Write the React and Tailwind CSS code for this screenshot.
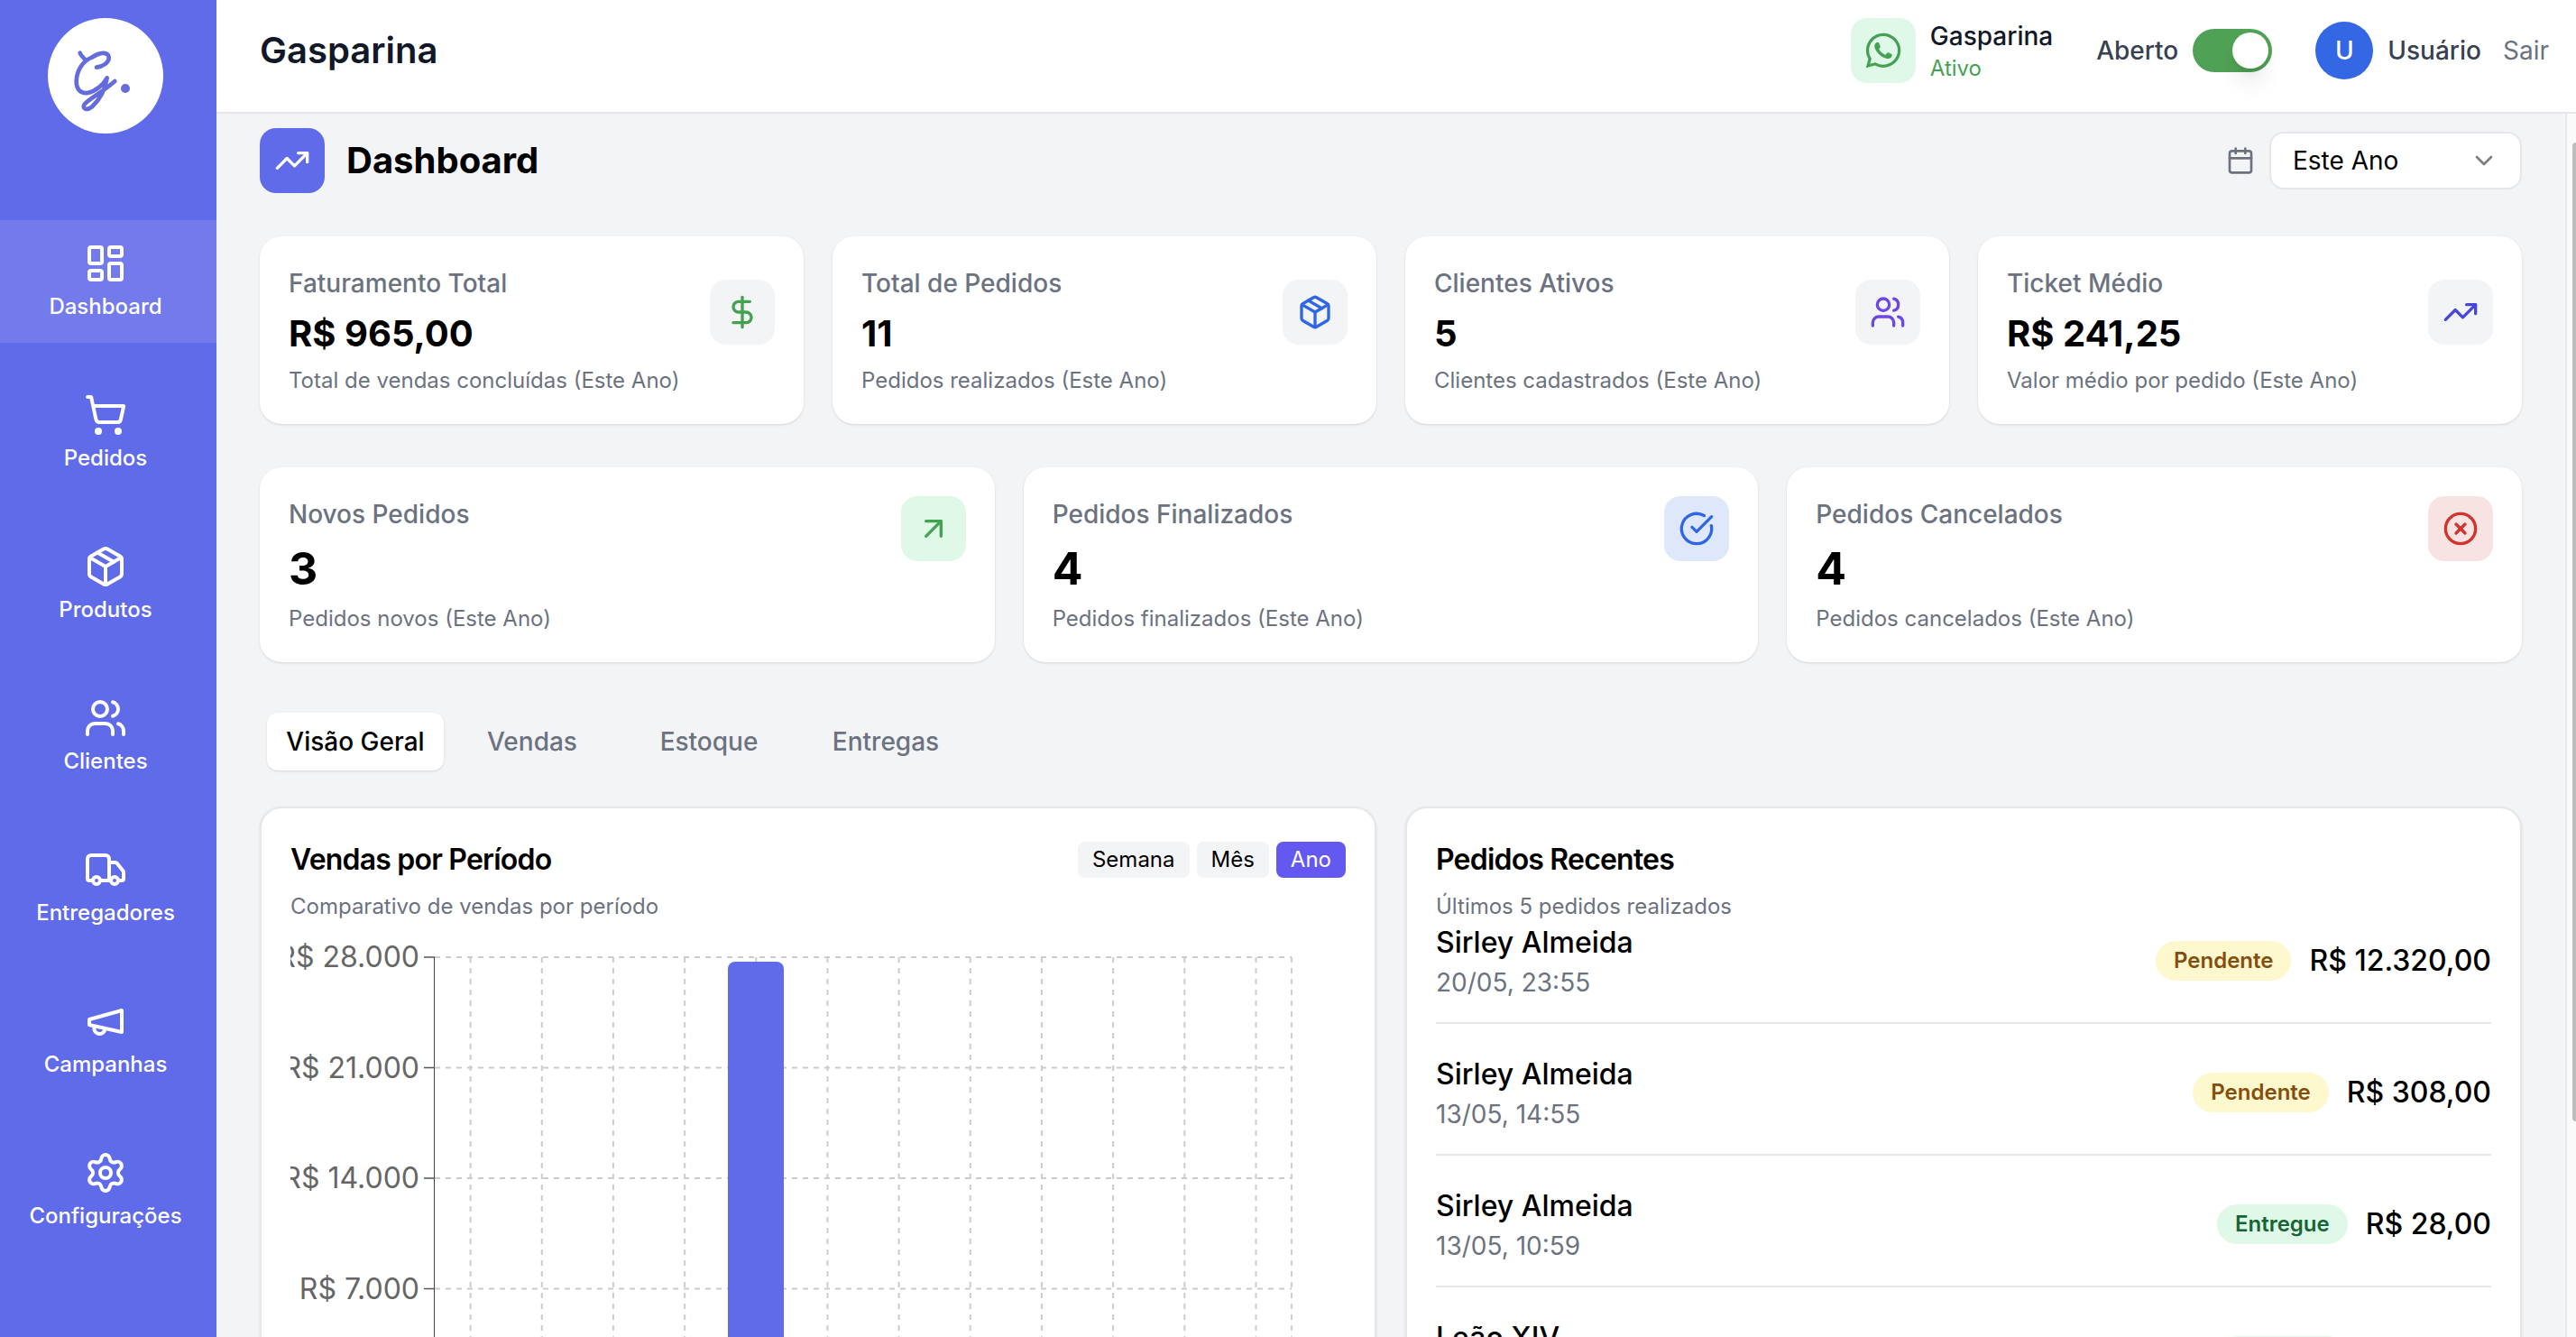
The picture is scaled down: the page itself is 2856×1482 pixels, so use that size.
import {
  ArrowUpRight,
  Calendar,
  ChevronDown,
  CircleCheckBig,
  CircleX,
  DollarSign,
  LayoutDashboard,
  Package,
  Settings,
  ShoppingCart,
  TrendingUp,
  Truck,
  Users,
} from 'lucide-react'
import { FaWhatsapp } from 'react-icons/fa'

// older lucide megaphone, the flat wedge one
function Megaphone({ className }) {
  return (
    <svg
      viewBox="0 0 24 24"
      fill="none"
      stroke="currentColor"
      strokeWidth="2"
      strokeLinecap="round"
      strokeLinejoin="round"
      className={className}
    >
      <path d="m3 11 18-5v12L3 14v-3z" />
      <path d="M11.6 16.8a3 3 0 1 1-5.8-1.6" />
    </svg>
  )
}

const navItems = [
  { label: 'Dashboard', icon: LayoutDashboard, active: true },
  { label: 'Pedidos', icon: ShoppingCart },
  { label: 'Produtos', icon: Package },
  { label: 'Clientes', icon: Users },
  { label: 'Entregadores', icon: Truck },
  { label: 'Campanhas', icon: Megaphone },
  { label: 'Configurações', icon: Settings },
]

const topCards = [
  { title: 'Faturamento Total', value: 'R$ 965,00', note: 'Total de vendas concluídas (Este Ano)', icon: DollarSign, color: 'text-[#45a152]' },
  { title: 'Total de Pedidos', value: '11', note: 'Pedidos realizados (Este Ano)', icon: Package, color: 'text-[#2f66e6]' },
  { title: 'Clientes Ativos', value: '5', note: 'Clientes cadastrados (Este Ano)', icon: Users, color: 'text-[#6d47e6]' },
  { title: 'Ticket Médio', value: 'R$ 241,25', note: 'Valor médio por pedido (Este Ano)', icon: TrendingUp, color: 'text-[#4646dc]' },
]

const statusCards = [
  { title: 'Novos Pedidos', value: '3', note: 'Pedidos novos (Este Ano)', icon: ArrowUpRight, color: 'text-[#45a152]', box: 'bg-[#e0f8e8]' },
  { title: 'Pedidos Finalizados', value: '4', note: 'Pedidos finalizados (Este Ano)', icon: CircleCheckBig, color: 'text-[#2f66e6]', box: 'bg-[#dfe8fa]' },
  { title: 'Pedidos Cancelados', value: '4', note: 'Pedidos cancelados (Este Ano)', icon: CircleX, color: 'text-[#cf352c]', box: 'bg-[#f8e3e3]' },
]

const tabs = ['Visão Geral', 'Vendas', 'Estoque', 'Entregas']

const orders = [
  { name: 'Sirley Almeida', date: '20/05, 23:55', status: 'Pendente', total: 'R$ 12.320,00' },
  { name: 'Sirley Almeida', date: '13/05, 14:55', status: 'Pendente', total: 'R$ 308,00' },
  { name: 'Sirley Almeida', date: '13/05, 10:59', status: 'Entregue', total: 'R$ 28,00' },
  { name: 'Leão XIV', date: '12/05, 18:20', status: 'Entregue', total: 'R$ 28,00' },
]

const yTicks = [
  { y: 40, label: 'R$ 28.000' },
  { y: 162.5, label: 'R$ 21.000' },
  { y: 285, label: 'R$ 14.000' },
  { y: 407.5, label: 'R$ 7.000' },
  { y: 530, label: 'R$ 0' },
]

const xLines = [...Array.from({ length: 12 }, (_, i) => 199.6 + i * 79.17), 1110]

function Logo() {
  return (
    <svg viewBox="40 30 384 384" className="h-[128px] w-[128px]">
      <circle cx="232" cy="222" r="192" fill="#fff" />
      <g fill="none" stroke="#646bdc" strokeWidth="14" strokeLinecap="round" strokeLinejoin="round">
        <path d="M147 146C150 156 157 160 166 170" />
        <path d="M188 160C212 144 240 140 243 160C245 178 222 192 202 194" />
        <path d="M188 160C156 172 136 205 135 240C135 268 150 282 172 279C200 274 224 252 237 229C232 262 214 300 186 326C170 338 156 332 160 320C166 304 210 286 263 240" />
      </g>
      <circle cx="298" cy="264" r="15" fill="#646bdc" />
    </svg>
  )
}

function Sidebar() {
  return (
    <aside className="flex w-[240px] shrink-0 flex-col bg-[#606bea] text-white">
      <div className="flex h-[244px] shrink-0 justify-center pt-5 pr-[6px]">
        <Logo />
      </div>
      <nav className="flex flex-col gap-8">
        {navItems.map((item) => {
          const Icon = item.icon
          return (
            <a
              key={item.label}
              className={`flex flex-col items-center gap-2 py-6 pr-[6px] ${item.active ? 'bg-[#727aec]' : ''}`}
            >
              <Icon className="h-12 w-12" strokeWidth={2} />
              <span className="text-[24px] leading-8 font-medium">{item.label}</span>
            </a>
          )
        })}
      </nav>
    </aside>
  )
}

function Header() {
  return (
    <header className="flex h-[126px] shrink-0 items-center justify-between border-b-2 border-[#e5e7eb] bg-white pr-[30px] pb-3 pl-12">
      <h2 className="text-[40px] font-semibold text-[#111827]">Gasparina</h2>
      <div className="flex items-center gap-12">
        <div className="flex items-center gap-4">
          <div className="flex h-[72px] w-[72px] items-center justify-center rounded-[18px] bg-[#e0f8e8] text-[#45a152]">
            <FaWhatsapp className="h-[44px] w-[44px]" />
          </div>
          <div>
            <p className="text-[28px] leading-10 font-medium text-[#111827]">Gasparina</p>
            <p className="text-[24px] leading-8 text-[#45a152]">Ativo</p>
          </div>
        </div>
        <div className="flex items-center gap-4">
          <span className="text-[28px] font-medium text-[#374151]">Aberto</span>
          <div className="flex h-12 w-[88px] items-center justify-end rounded-full bg-[#4fa155] pr-1">
            <div className="h-10 w-10 rounded-full bg-white shadow-xl" />
          </div>
        </div>
        <div className="flex items-center">
          <div className="flex h-16 w-16 items-center justify-center rounded-full bg-[#3367e4] text-[28px] font-medium text-white">
            U
          </div>
          <span className="ml-4 text-[28px] font-medium text-[#374151]">Usuário</span>
          <span className="ml-6 text-[28px] text-[#6b7280]">Sair</span>
        </div>
      </div>
    </header>
  )
}

function TopCard({ card }) {
  const Icon = card.icon
  return (
    <div className="rounded-3xl bg-white p-8 shadow-sm">
      <div className="flex items-center justify-between">
        <div>
          <p className="text-[28px] leading-10 font-medium text-[#6b7280]">{card.title}</p>
          <p className="mt-2 text-[40px] leading-14 font-bold text-black">{card.value}</p>
        </div>
        <div className={`flex h-[72px] w-[72px] items-center justify-center rounded-[18px] bg-[#f3f4f6] ${card.color}`}>
          <Icon className="h-10 w-10" />
        </div>
      </div>
      <p className="mt-2 text-[24px] leading-8 text-[#6b7280]">{card.note}</p>
    </div>
  )
}

function StatusCard({ card }) {
  const Icon = card.icon
  return (
    <div className="rounded-3xl bg-white p-8 shadow-sm">
      <div className="flex items-start justify-between">
        <div>
          <p className="text-[28px] leading-10 font-medium text-[#6b7280]">{card.title}</p>
          <p className="mt-2 text-[50px] leading-16 font-bold text-black">{card.value}</p>
          <p className="mt-2 text-[24px] leading-8 text-[#6b7280]">{card.note}</p>
        </div>
        <div className={`flex h-[72px] w-[72px] items-center justify-center rounded-[18px] ${card.box} ${card.color}`}>
          <Icon className="h-10 w-10" />
        </div>
      </div>
    </div>
  )
}

function SalesChart() {
  return (
    <svg viewBox="0 0 1170 600" className="block h-[600px] w-full">
      <g stroke="#ccc" strokeWidth="2" strokeDasharray="6 6">
        {yTicks.map((tick) => (
          <line key={tick.y} x1="160" x2="1110" y1={tick.y} y2={tick.y} />
        ))}
        {xLines.map((x) => (
          <line key={x} x1={x} x2={x} y1="40" y2="530" />
        ))}
      </g>
      <path d="M485 530V53a8 8 0 0 1 8-8h46a8 8 0 0 1 8 8V530Z" fill="#606bea" />
      <line x1="159.5" x2="159.5" y1="40" y2="530" stroke="#444" strokeWidth="1" />
      {yTicks.map((tick) => (
        <g key={tick.label}>
          <line x1="148" x2="160" y1={tick.y} y2={tick.y} stroke="#555" strokeWidth="1.5" />
          <text x="143" y={tick.y + 11} textAnchor="end" fill="#666" className="text-[32px]">
            {tick.label}
          </text>
        </g>
      ))}
    </svg>
  )
}

function SalesCard() {
  return (
    <div className="rounded-3xl border-2 border-[#e5e7eb] bg-white px-8 pt-[37px] pb-8 shadow-sm">
      <div className="flex h-10 items-center justify-between">
        <h3 className="text-[32px] font-semibold tracking-tight text-black">Vendas por Período</h3>
        <div className="flex gap-2">
          <button className="h-10 rounded-lg bg-[#f3f4f6] px-4 text-[24px] text-black">Semana</button>
          <button className="h-10 rounded-lg bg-[#f3f4f6] px-4 text-[24px] text-black">Mês</button>
          <button className="h-10 rounded-lg bg-[#6358ef] px-4 text-[24px] text-white">Ano</button>
        </div>
      </div>
      <p className="mt-4 text-[24px] leading-8 text-[#6b7280]">Comparativo de vendas por período</p>
      <SalesChart />
    </div>
  )
}

function StatusBadge({ status }) {
  const tone = status === 'Pendente' ? 'bg-[#fdf8cd] text-[#854d0e]' : 'bg-[#e0f8e8] text-[#166534]'
  return (
    <span className={`flex h-11 items-center rounded-full px-5 text-[24px] font-semibold ${tone}`}>{status}</span>
  )
}

function RecentOrders() {
  return (
    <div className="rounded-3xl border-2 border-[#e5e7eb] bg-white px-8 pt-[37px] pb-8 shadow-sm">
      <div className="flex h-10 items-center">
        <h3 className="text-[32px] font-semibold tracking-tight text-black">Pedidos Recentes</h3>
      </div>
      <p className="mt-4 text-[24px] leading-8 text-[#6b7280]">Últimos 5 pedidos realizados</p>
      <div className="flex flex-col gap-8">
        {orders.map((order) => (
          <div key={order.date} className="flex items-center justify-between border-b-2 border-[#e5e7eb] pb-6">
            <div>
              <p className="text-[32px] leading-12 font-medium text-black">{order.name}</p>
              <p className="text-[28px] leading-10 text-[#6b7280]">{order.date}</p>
            </div>
            <div className="flex items-center gap-5">
              <StatusBadge status={order.status} />
              <span className="text-[32px] font-medium text-black">{order.total}</span>
            </div>
          </div>
        ))}
      </div>
    </div>
  )
}

function Dashboard() {
  return (
    <div className="min-w-0 flex-1 overflow-hidden px-12 pt-4">
      <div className="flex h-[72px] items-center justify-between">
        <div className="flex items-center gap-6">
          <div className="flex h-[72px] w-[72px] items-center justify-center rounded-[18px] bg-[#606bea] text-white">
            <TrendingUp className="h-10 w-10" />
          </div>
          <h1 className="text-[40px] font-bold text-black">Dashboard</h1>
        </div>
        <div className="flex items-center gap-4">
          <Calendar className="h-8 w-8 text-[#6b7280]" />
          <div className="flex h-16 w-[280px] items-center justify-between rounded-2xl border-2 border-[#e5e7eb] bg-white pr-6 pl-6">
            <span className="text-[28px] text-black">Este Ano</span>
            <ChevronDown className="h-8 w-8 text-black opacity-50" />
          </div>
        </div>
      </div>

      <div className="mt-12 grid grid-cols-4 gap-8">
        {topCards.map((card) => (
          <TopCard key={card.title} card={card} />
        ))}
      </div>

      <div className="mt-12 grid grid-cols-3 gap-8">
        {statusCards.map((card) => (
          <StatusCard key={card.title} card={card} />
        ))}
      </div>

      <div className="mt-12 grid w-fit grid-cols-4 p-2">
        {tabs.map((tab, index) => (
          <button
            key={tab}
            className={`h-16 w-[196px] rounded-xl text-[28px] font-medium ${
              index === 0 ? 'bg-white text-black shadow-sm' : 'text-[#6b7280]'
            }`}
          >
            {tab}
          </button>
        ))}
      </div>

      <div className="mt-8 grid grid-cols-2 gap-8">
        <SalesCard />
        <RecentOrders />
      </div>
    </div>
  )
}

export default function App() {
  return (
    <div className="flex h-screen w-screen overflow-hidden bg-[#f3f4f6] font-['Inter',sans-serif] antialiased">
      <Sidebar />
      <div className="flex min-w-0 flex-1 flex-col">
        <Header />
        <div className="flex min-h-0 flex-1">
          <Dashboard />
          <div className="w-3 shrink-0 border-l-2 border-[#e5e7eb] bg-[#fafafa] pt-8">
            <div className="ml-auto h-[1085px] w-1 rounded-l-full bg-[#bdbdbd]" />
          </div>
        </div>
      </div>
    </div>
  )
}
